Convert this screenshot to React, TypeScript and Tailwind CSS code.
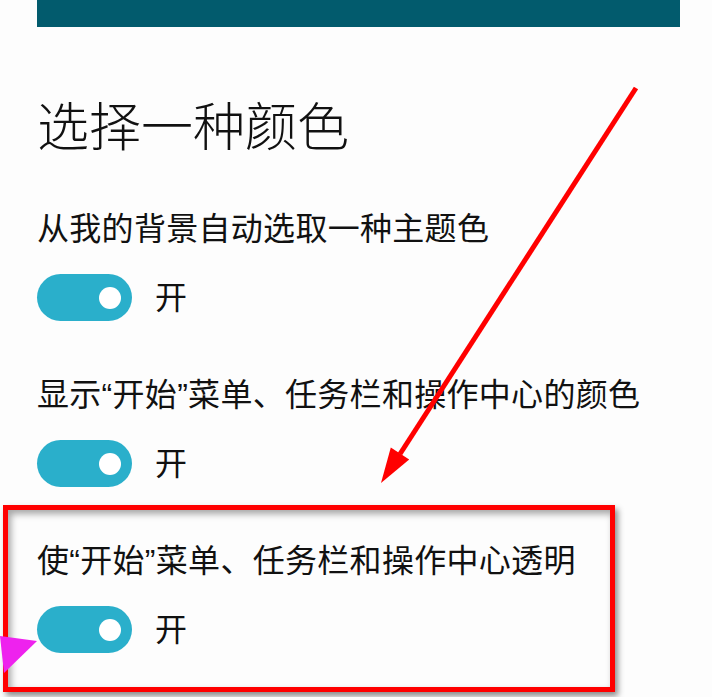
import React from 'react';

const cjk = { fontFamily: '"Liberation Sans", "Noto Sans CJK SC", sans-serif' };

function Toggle() {
  return (
    <div className="flex items-center gap-[23px]">
      <div className="w-[95px] h-[47px] rounded-full bg-[#2aafcb] flex items-center justify-end pr-[11px]">
        <div className="w-[22px] h-[22px] rounded-full bg-white" />
      </div>
      <span className="text-[32px] leading-[32px] text-[#111]">开</span>
    </div>
  );
}

function Option({ label }: { label: string }) {
  return (
    <div className="flex flex-col">
      <p className="text-[32px] leading-[32px] tracking-[0.3px] text-[#111] whitespace-nowrap">{label}</p>
      <div className="mt-[29px]">
        <Toggle />
      </div>
    </div>
  );
}

export default function App() {
  return (
    <div className="relative w-[712px] h-[697px] overflow-hidden bg-[#fdfdfd]" style={cjk}>
      <div className="ml-[37px] w-[643px] h-[27px] bg-[#025b6d]" />
      <div className="pl-[37px]">
        <h1 className="mt-[73px] text-[52px] leading-[56px] font-light text-[#111]">选择一种颜色</h1>
        <div className="mt-[57px] flex flex-col gap-[58px]">
          <Option label="从我的背景自动选取一种主题色" />
          <Option label="显示“开始”菜单、任务栏和操作中心的颜色" />
          <Option label="使“开始”菜单、任务栏和操作中心透明" />
        </div>
      </div>

      {/* annotation: red highlight box */}
      <div className="absolute left-[3px] top-[505px] w-[612px] h-[187px] border-[5px] border-[#ff0000] shadow-[3px_4px_6px_rgba(0,0,0,0.45),inset_3px_4px_7px_rgba(0,0,0,0.35)]" />

      {/* annotation: arrow + pointer */}
      <svg className="absolute inset-0 pointer-events-none" width="712" height="697" viewBox="0 0 712 697">
        <line x1="636" y1="88" x2="400" y2="454" stroke="#ff0000" strokeWidth="5" />
        <polygon points="381,483 390.8,447.6 409.2,459.5" fill="#ff0000" />
        <polygon points="0,636 37,641 4,673" fill="#ee22ee" />
      </svg>
    </div>
  );
}
